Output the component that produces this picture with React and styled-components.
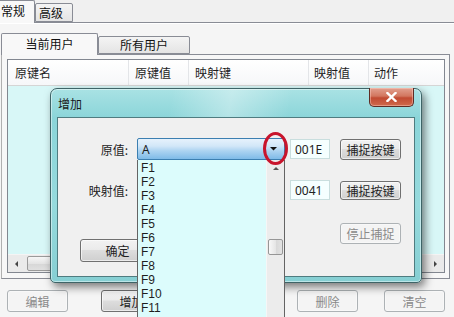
import React from 'react';
import styled, { createGlobalStyle } from 'styled-components';

const Global = createGlobalStyle`
  html, body { margin: 0; padding: 0; background: #f0f0f0; }
  body {
    font-family: "Noto Sans", "Noto Sans CJK SC", sans-serif;
    font-size: 12px;
    color: #1e1e1e;
  }
  #root { width: 454px; height: 317px; overflow: hidden; }
`;

const Window = styled.div`
  position: relative;
  width: 454px;
  height: 317px;
  overflow: hidden;
  background: #f0f0f0;
`;

const TabStrip = styled.div`
  display: flex;
  align-items: flex-end;
  height: ${p => p.$h}px;
  padding-top: ${p => p.$top || 0}px;
  margin-left: ${p => p.$left || 0}px;
  position: relative;
  z-index: 1;
`;

const Tab = styled.div`
  box-sizing: border-box;
  width: ${p => p.$w}px;
  height: ${p => (p.$active ? p.$ah : p.$ih)}px;
  margin-bottom: ${p => (p.$active ? -1 : 0)}px;
  border: 1px solid #898c95;
  border-bottom: ${p => (p.$active ? 'none' : '1px solid #898c95')};
  border-radius: 2px 2px 0 0;
  background: ${p => (p.$active ? '#f8f8f8' : 'linear-gradient(#f4f4f4, #e4e4e4)')};
  display: flex;
  align-items: center;
  justify-content: ${p => (p.$pl !== undefined ? 'flex-start' : 'center')};
  padding-left: ${p => p.$pl || 0}px;
  padding-bottom: ${p => (p.$active ? 2 : 0)}px;
  font-family: "Noto Sans CJK SC", sans-serif;
  font-size: 12px;
  line-height: 14px;
  color: #111;
`;

const OuterPage = styled.div`
  border-top: 1px solid #898c95;
  box-shadow: inset 0 1px 0 #ffffff;
  background: #f5f5f5;
  height: 294px;
`;

const InnerPage = styled.div`
  box-sizing: border-box;
  margin-left: 1px;
  width: 449px;
  height: 225px;
  border: 1px solid #898c95;
  border-left-color: #b0b0b0;
  background: #f7f7f7;
  padding: 4px 4px 5px 5px;
`;

const ListView = styled.div`
  box-sizing: border-box;
  height: 214px;
  border: 1px solid #828790;
  background: #d8f7f7;
  display: flex;
  flex-direction: column;
`;

const HeaderRow = styled.div`
  display: flex;
  height: 25px;
  background: linear-gradient(#ffffff, #f6f7f9);
  border-bottom: 1px solid #d5d5d5;
`;

const HeaderCell = styled.div`
  box-sizing: border-box;
  width: ${p => p.$w}px;
  flex: ${p => (p.$w ? 'none' : 1)};
  padding-left: ${p => p.$pl}px;
  display: flex;
  align-items: center;
  border-right: ${p => (p.$w ? '1px solid #e3e5e8' : 'none')};
  font-family: "Noto Sans CJK SC", sans-serif;
  font-size: 12px;
  color: #1e1e1e;
`;

const ListBody = styled.div`
  flex: 1;
`;

const HScroll = styled.div`
  height: 17px;
  display: flex;
  align-items: stretch;
  background: #eaeaea;
  border-top: 1px solid #f4f4f4;
`;

const ScrollArrow = styled.div`
  width: 17px;
  display: flex;
  align-items: center;
  justify-content: center;
`;

const HThumb = styled.div`
  box-sizing: border-box;
  margin: 1px 0;
  width: 170px;
  margin-left: 2px;
  border: 1px solid #9a9a9a;
  border-radius: 2px;
  background: linear-gradient(#f6f6f6, #e4e4e4 50%, #d6d6d6 51%, #e0e0e0);
`;

const Spacer = styled.div`
  flex: 1;
`;

const ButtonRow = styled.div`
  display: flex;
  padding: 11px 0 0 7px;
`;

const Button = styled.div`
  box-sizing: border-box;
  width: ${p => p.$w || 61}px;
  height: ${p => p.$h || 22}px;
  margin-left: ${p => p.$ml || 0}px;
  margin-top: ${p => p.$mt || 0}px;
  margin-right: ${p => p.$mr || 0}px;
  flex: none;
  border: 1px solid ${p => (p.$disabled ? '#adb2b5' : '#707070')};
  border-radius: 3px;
  background: ${p =>
    p.$disabled
      ? '#f4f4f4'
      : 'linear-gradient(#f2f2f2 0%, #ebebeb 45%, #dddddd 50%, #cfcfcf 100%)'};
  box-shadow: inset 0 0 0 1px ${p => (p.$disabled ? '#f8f8f8' : 'rgba(255,255,255,0.6)')};
  display: flex;
  align-items: center;
  justify-content: center;
  font-family: "Noto Sans CJK SC", sans-serif;
  font-size: 12px;
  color: ${p => (p.$disabled ? '#8a8a8a' : '#1e1e1e')};
`;

/* ---------- dialog ---------- */

const Dialog = styled.div`
  position: absolute;
  left: 50px;
  top: 88px;
  width: 372px;
  height: 195px;
  box-sizing: border-box;
  border: 1px solid #3e6467;
  border-radius: 7px 7px 5px 5px;
  background:
    linear-gradient(100deg, rgba(255,255,255,0) 30%, rgba(255,255,255,0.35) 45%, rgba(255,255,255,0) 60%),
    linear-gradient(#a9e2e4 0%, #8bd5d9 15%, #96dadd 60%, #86cfd3 100%);
  box-shadow: 3px 4px 9px rgba(0, 0, 0, 0.5), inset 0 0 0 1px rgba(255,255,255,0.45);
  display: flex;
  flex-direction: column;
  z-index: 5;
`;

const TitleBar = styled.div`
  height: 28px;
  display: flex;
  align-items: flex-start;
  padding: 0 7px 0 7px;
`;

const Title = styled.div`
  font-family: "Noto Sans CJK SC", sans-serif;
  font-size: 12px;
  line-height: 14px;
  margin-top: 8px;
  color: #1a1a1a;
`;

const CloseButton = styled.div`
  margin-left: auto;
  margin-top: -1px;
  width: 45px;
  height: 19px;
  box-sizing: border-box;
  border: 1px solid #5e2c24;
  border-top: none;
  border-radius: 0 0 5px 5px;
  background: linear-gradient(#e2a08f 0%, #d2765f 45%, #c14a32 55%, #cf6a4c 100%);
  box-shadow: inset 0 0 0 1px rgba(255, 210, 200, 0.45);
  display: flex;
  align-items: center;
  justify-content: center;
`;

const Client = styled.div`
  box-sizing: border-box;
  margin: 0 6px 5px 6px;
  flex: 1;
  border: 1px solid #4f7c80;
  background: #f0f0f0;
  display: flex;
  flex-direction: column;
`;

const FormRow = styled.div`
  display: flex;
  align-items: center;
  height: ${p => p.$h}px;
  margin-top: ${p => p.$mt}px;
`;

const Label = styled.div`
  width: 70px;
  text-align: right;
  font-family: "Noto Sans CJK SC", sans-serif;
  font-size: 12px;
  color: #1e1e1e;
  flex: none;
`;

const Combo = styled.div`
  box-sizing: border-box;
  width: 148px;
  height: ${p => (p.$focus ? 22 : 20)}px;
  margin-left: 9px;
  flex: none;
  border: 1px solid ${p => (p.$focus ? '#3c7fb1' : '#abadb3')};
  border-radius: 2px;
  background: ${p =>
    p.$focus
      ? 'linear-gradient(#e6f2fc 0%, #d2e7f8 35%, #acd3f1 60%, #7fbbe8 100%)'
      : '#ffffff'};
  display: flex;
  align-items: center;
  padding: 0 7px 0 4px;
  font-size: 12px;
`;

const ComboText = styled.span`
  flex: 1;
`;

const Field = styled.div`
  box-sizing: border-box;
  width: 40px;
  height: 20px;
  margin-left: 5px;
  flex: none;
  border: 1px solid #c9dede;
  background: #f5ffff;
  display: flex;
  align-items: center;
  padding-left: 4px;
  font-size: 12px;
  color: #222;
`;

const BottomArea = styled.div`
  display: flex;
  justify-content: space-between;
  align-items: flex-start;
  margin-top: 23px;
`;

/* ---------- dropdown ---------- */

const DropList = styled.div`
  position: absolute;
  left: 137px;
  top: 160px;
  width: 148px;
  height: 170px;
  box-sizing: border-box;
  border: 1px solid #646464;
  border-top: none;
  background: #dcfcfc;
  display: flex;
  z-index: 10;
`;

const Items = styled.div`
  flex: 1;
  padding-top: 1px;
`;

const Item = styled.div`
  height: 14px;
  line-height: 14px;
  padding-left: 3px;
  font-family: "Liberation Sans", sans-serif;
  font-size: 12px;
  color: #1e1e1e;
`;

const VScroll = styled.div`
  width: 17px;
  background: #ececec;
  border-left: 1px solid #f6f6f6;
  display: flex;
  flex-direction: column;
  align-items: center;
`;

const UpArrow = styled.div`
  height: 17px;
  display: flex;
  align-items: center;
  justify-content: center;
`;

const VThumb = styled.div`
  box-sizing: border-box;
  width: 15px;
  height: 16px;
  margin-top: 62px;
  border: 1px solid #969696;
  border-radius: 2px;
  background: linear-gradient(90deg, #f8f8f8, #e6e6e6 50%, #d8d8d8 51%, #e2e2e2);
`;

const Highlight = styled.div`
  position: absolute;
  left: 263px;
  top: 132px;
  width: 25px;
  height: 33px;
  box-sizing: border-box;
  border: 3.5px solid #c8142c;
  border-radius: 50%;
  z-index: 20;
`;

const Tri = ({ dir, size = 4, color = '#000' }) => {
  const pts = {
    down: `0,0 ${size * 2},0 ${size},${size}`,
    up: `${size},0 ${size * 2},${size} 0,${size}`,
    left: `${size},0 ${size},${size * 2} 0,${size}`,
    right: `0,0 ${size},${size} 0,${size * 2}`,
  }[dir];
  const w = dir === 'left' || dir === 'right' ? size : size * 2;
  const h = dir === 'left' || dir === 'right' ? size * 2 : size;
  return (
    <svg width={w} height={h} viewBox={`0 0 ${w} ${h}`}>
      <polygon points={pts} fill={color} />
    </svg>
  );
};

const columns = [
  { label: '原键名', w: 121, pl: 7 },
  { label: '原键值', w: 60, pl: 6 },
  { label: '映射键', w: 120, pl: 6 },
  { label: '映射值', w: 60, pl: 5 },
  { label: '动作', w: 0, pl: 5 },
];

const items = ['F1', 'F2', 'F3', 'F4', 'F5', 'F6', 'F7', 'F8', 'F9', 'F10', 'F11'];

export default function App() {
  return (
    <Window>
      <Global />
      <TabStrip $h={22} $left={-3}>
        <Tab $active $w={38} $ah={23} $pl={3}>常规</Tab>
        <Tab $w={38} $ih={19} $pl={3}>高级</Tab>
      </TabStrip>
      <OuterPage>
        <TabStrip $h={26} $top={5} $left={1}>
          <Tab $active $w={97} $ah={22}>当前用户</Tab>
          <Tab $w={92} $ih={18}>所有用户</Tab>
        </TabStrip>
        <InnerPage>
          <ListView>
            <HeaderRow>
              {columns.map(c => (
                <HeaderCell key={c.label} $w={c.w} $pl={c.pl}>{c.label}</HeaderCell>
              ))}
            </HeaderRow>
            <ListBody />
            <HScroll>
              <ScrollArrow><Tri dir="left" size={3} color="#444" /></ScrollArrow>
              <HThumb />
              <Spacer />
              <ScrollArrow><Tri dir="right" size={3} color="#444" /></ScrollArrow>
            </HScroll>
          </ListView>
        </InnerPage>
        <ButtonRow>
          <Button $disabled>编辑</Button>
          <Button $ml={33}>增加</Button>
          <Button $ml={33} $disabled>修改</Button>
          <Button $ml={41} $disabled>删除</Button>
          <Button $ml={26} $disabled>清空</Button>
        </ButtonRow>
      </OuterPage>

      <Dialog>
        <TitleBar>
          <Title>增加</Title>
          <CloseButton>
            <svg width="11" height="10" viewBox="0 0 11 10">
              <path d="M1.5 1 L9.5 9 M9.5 1 L1.5 9" stroke="#ffffff" strokeWidth="2.4" strokeLinecap="square" />
            </svg>
          </CloseButton>
        </TitleBar>
        <Client>
          <FormRow $h={22} $mt={20}>
            <Label>原值:</Label>
            <Combo $focus>
              <ComboText>A</ComboText>
              <Tri dir="down" size={3.5} color="#111" />
            </Combo>
            <Field>001E</Field>
            <Button $ml={10} $h={21}>捕捉按键</Button>
          </FormRow>
          <FormRow $h={20} $mt={20}>
            <Label>映射值:</Label>
            <Combo />
            <Field>0041</Field>
            <Button $ml={10} $h={19}>捕捉按键</Button>
          </FormRow>
          <BottomArea>
            <Button $ml={22} $mt={16} $w={75} $h={23}>确定</Button>
            <Button $mr={13} $h={21} $disabled>停止捕捉</Button>
          </BottomArea>
        </Client>
      </Dialog>

      <DropList>
        <Items>
          {items.map(i => <Item key={i}>{i}</Item>)}
        </Items>
        <VScroll>
          <UpArrow><Tri dir="up" size={3} color="#555" /></UpArrow>
          <VThumb />
        </VScroll>
      </DropList>
      <Highlight />
    </Window>
  );
}
